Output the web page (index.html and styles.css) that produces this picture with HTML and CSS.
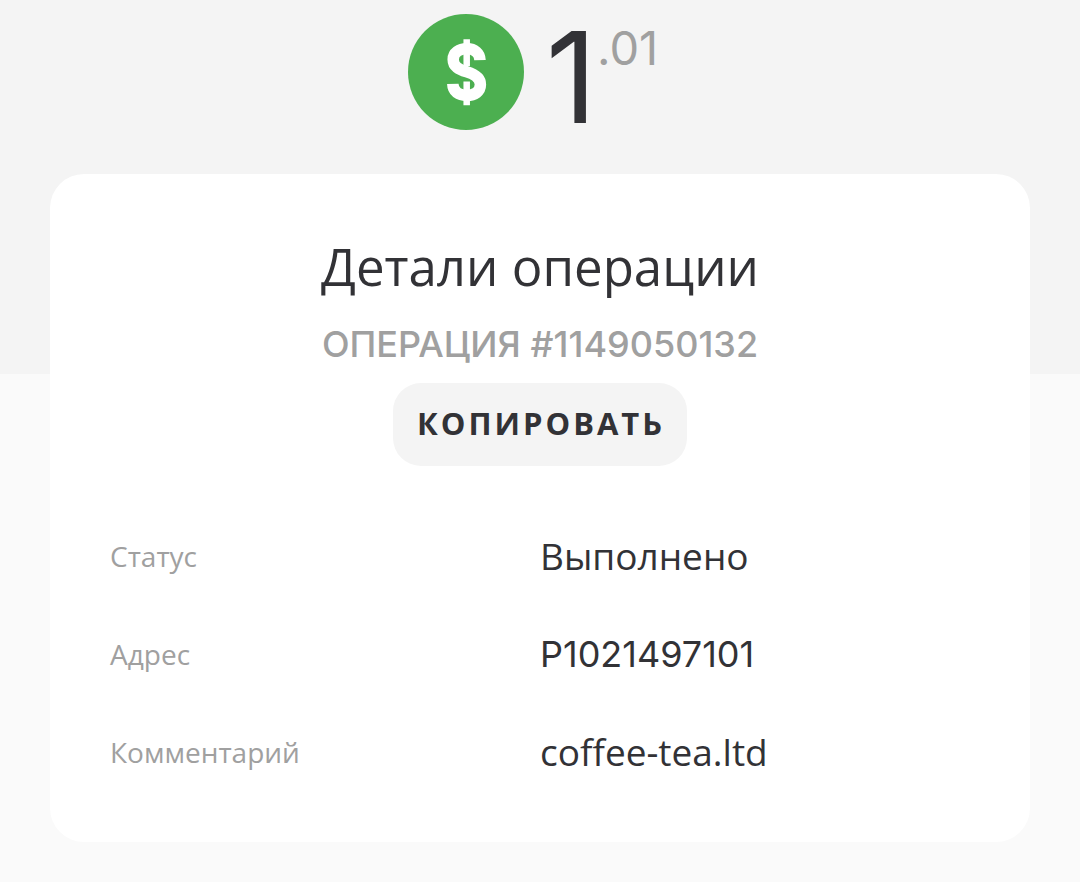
FILE: index.html
```html
<!DOCTYPE html>
<html lang="ru">
<head>
<meta charset="utf-8">
<meta name="viewport" content="width=device-width, initial-scale=1">
<title>Детали операции</title>
<link rel="stylesheet" href="styles.css">
</head>
<body>
<header class="amount">
  <svg class="coin" viewBox="0 0 116 116" aria-hidden="true">
    <circle cx="58" cy="58" r="58" fill="#4caf50"/>
    <g fill="none" stroke="#fff">
      <path stroke-width="11.5" d="M72 46.200C71.800 39 66.500 34.800 59 34.800C51 34.800 45.200 39 45.200 45.400C45.200 52.600 51 55.400 58.700 57.800C66.500 60.200 72.400 63.400 72.400 70.600C72.400 77.500 66.800 81.300 58.800 81.300C50.500 81.300 45 77.500 44.800 69.800"/>
      <path stroke-width="6.500" d="M58.700 25.200V52M58.700 67.500V91.200"/>
    </g>
  </svg>
  <p class="sum"><span class="whole">1</span><span class="cents">.01</span></p>
</header>
<main class="card">
  <h1 class="title">Детали операции</h1>
  <p class="number">ОПЕРАЦИЯ #1149050132</p>
  <button class="copy" type="button">КОПИРОВАТЬ</button>
  <dl class="details">
    <dt>Статус</dt><dd>Выполнено</dd>
    <dt>Адрес</dt><dd class="code">P1021497101</dd>
    <dt>Комментарий</dt><dd>coffee-tea.ltd</dd>
  </dl>
</main>
</body>
</html>
```

FILE: styles.css
```css
* { box-sizing: border-box; }

body {
  margin: 0;
  padding: 14px 50px 40px;
  background: linear-gradient(#f4f4f4 374px, #fafafa 374px) no-repeat #fafafa;
  color: #323236;
  font-family: "Open Sans", sans-serif;
}

.amount {
  display: flex;
  justify-content: center;
  align-items: flex-start;
  gap: 22px;
  height: 160px;
  padding-right: 14px;
}

.coin { width: 116px; height: 116px; }

.sum { display: flex; margin: 0; }
.whole { font-family: Inter, sans-serif; font-size: 126px; line-height: 126px; }
.cents { font-family: Inter, sans-serif; color: #a0a0a0; font-size: 47px; line-height: 68px; }

.card {
  display: flex;
  flex-direction: column;
  align-items: center;
  padding: 58px 60px 64px;
  border-radius: 34px;
  background: #fff;
}

.title { margin: 0; font-size: 51px; font-weight: 400; line-height: 68px; }

.number {
  margin: 18px 0 13px;
  color: #a0a0a0;
  font-family: Inter, sans-serif;
  font-size: 36px;
  font-weight: 500;
  line-height: 52px;
}

.copy {
  padding: 17px 22px 20px 24px;
  border: 0;
  border-radius: 28px;
  background: #f4f4f4;
  color: inherit;
  font: 700 31px/46px "Open Sans", sans-serif;
  letter-spacing: 3px;
}

.details {
  display: grid;
  grid-template-columns: 1fr 1fr;
  row-gap: 46px;
  width: 100%;
  margin: 64px 0 0;
}

.details dt { color: #a0a0a0; font-size: 28px; line-height: 52px; }
.details dd { margin: 0; font-size: 37px; line-height: 52px; }
.details .code { font-family: Inter, sans-serif; font-size: 36px; }
```
